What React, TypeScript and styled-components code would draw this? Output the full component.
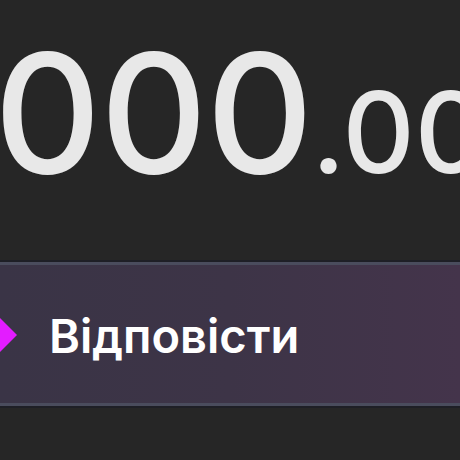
import React from "react";
import styled, { createGlobalStyle } from "styled-components";

const Global = createGlobalStyle`
  html, body { margin: 0; padding: 0; background: #262626; }
  body { width: 460px; height: 460px; overflow: hidden; font-family: Inter, Roboto, sans-serif; }
`;

const Screen = styled.div`
  width: 460px;
  height: 460px;
  overflow: hidden;
  background: #262626;
  display: flex;
  flex-direction: column;
`;

const AmountRow = styled.div`
  height: 262px;
  display: flex;
  align-items: flex-start;
  white-space: nowrap;
  overflow: hidden;
`;

const Amount = styled.div`
  margin-top: 30px;
  margin-left: -6px;
  display: flex;
  align-items: baseline;
  color: #e8e8e8;
  line-height: 1;
`;

const Whole = styled.span`
  font-size: 166px;
  font-weight: 500;
  letter-spacing: -1px;
`;

const Fraction = styled.span`
  font-size: 112px;
  font-weight: 500;
  margin-left: -1px;
`;

const ReplyBar = styled.div`
  height: 138px;
  border-top: 3px solid #4a4c5d;
  border-bottom: 3px solid #4a4c5d;
  box-shadow: 0 -2px 0 #1e1f26, 0 2px 0 #1e1f26;
  background: linear-gradient(90deg, #3a3446 0%, #3d3447 50%, #44344b 100%);
  display: flex;
  align-items: center;
  gap: 32px;
`;

const Diamond = styled.div`
  width: 34px;
  height: 34px;
  margin-left: -17px;
  background: #e31cff;
  clip-path: polygon(0 50%, 50% 0, 100% 50%, 50% 100%);
  margin-top: 2px;
`;

const Label = styled.span`
  color: #ffffff;
  font-family: Inter, Roboto, sans-serif;
  font-size: 47px;
  font-weight: 600;
  margin-top: 2px;
`;

export default function App() {
  return (
    <>
      <Global />
      <Screen>
        <AmountRow>
          <Amount>
            <Whole>000</Whole>
            <Fraction>.00</Fraction>
          </Amount>
        </AmountRow>
        <ReplyBar>
          <Diamond />
          <Label>Відповісти</Label>
        </ReplyBar>
      </Screen>
    </>
  );
}
